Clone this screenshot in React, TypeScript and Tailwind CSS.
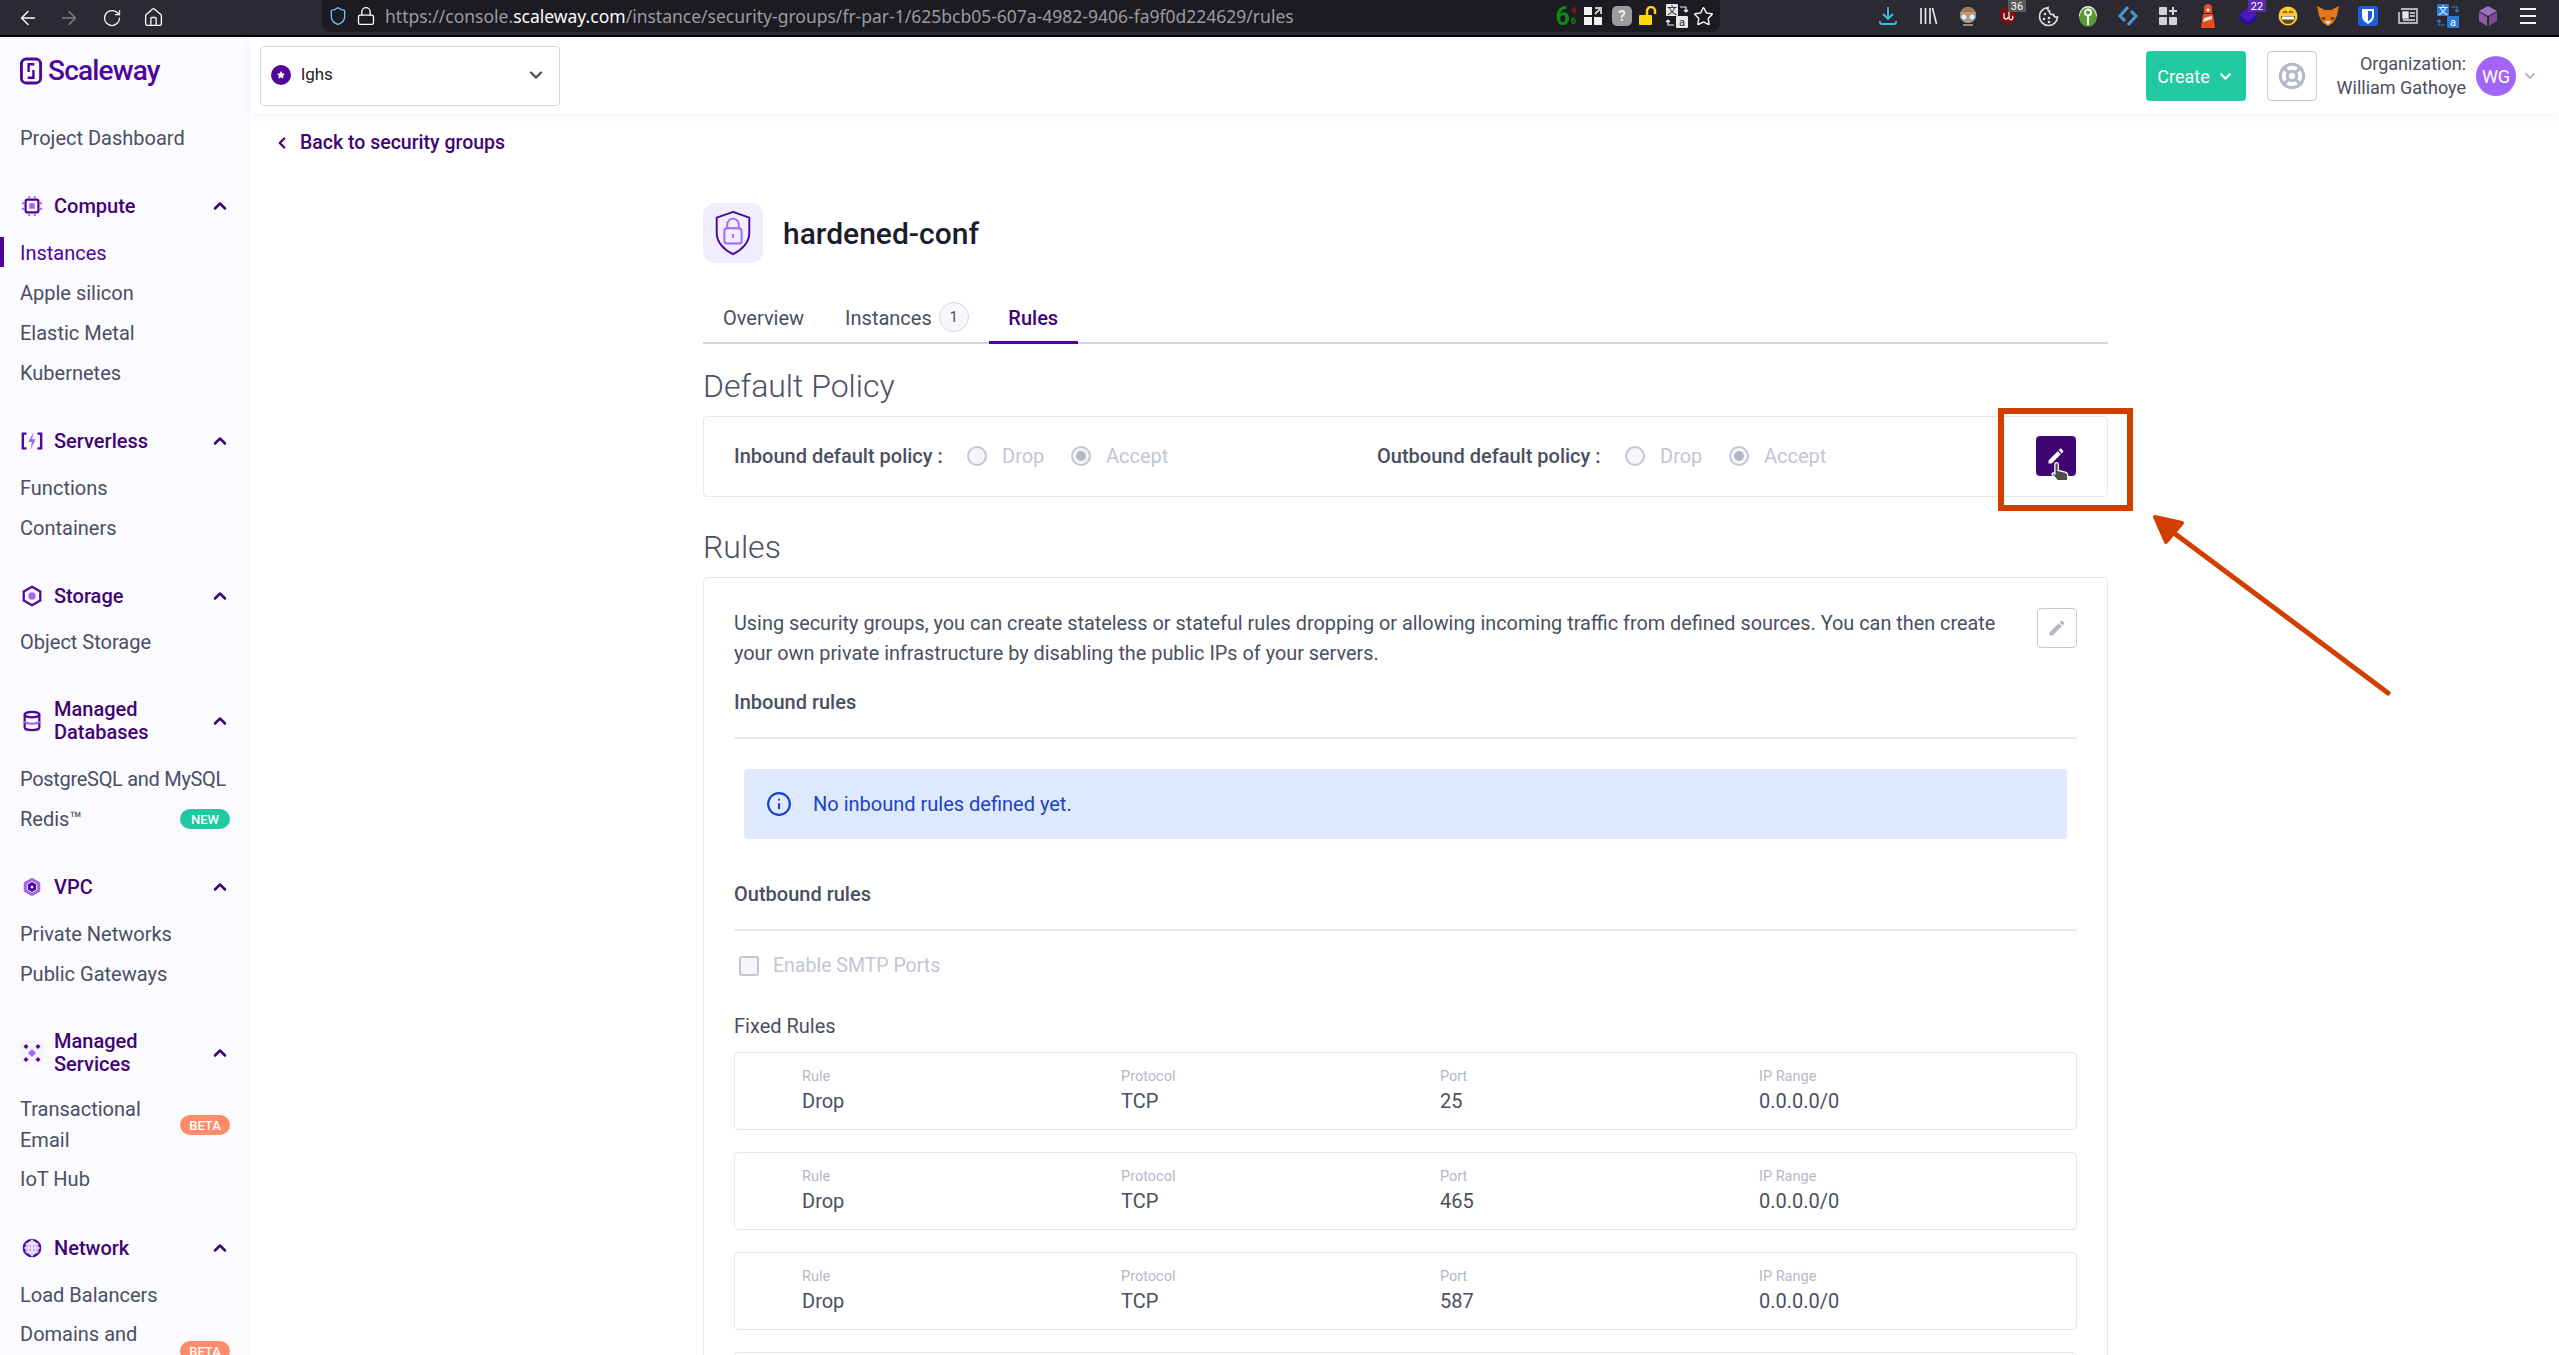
import React from 'react';
import { ArrowLeft, ArrowRight, ChevronDown, ChevronLeft, ChevronUp, Home, Info, LifeBuoy, Lock, RotateCw, Shield, Star } from 'lucide-react';

const font = "font-['Roboto','Noto_Sans_CJK_SC',sans-serif]";

function Badge({ label, color, cls }: { label: string; color: string; cls?: string }) {
  return <span className={`${color} ml-auto flex h-[20px] w-[50px] shrink-0 items-center justify-center rounded-full text-[13px] font-medium text-white ${cls ?? ''}`}>{label}</span>;
}

function NavItem({ label, active, badge, badgeColor, cls }: { label: React.ReactNode; active?: boolean; badge?: string; badgeColor?: string; cls?: string }) {
  return (
    <div className={`relative flex min-h-[40px] items-center pl-[20px] pr-[20px] text-[20px] leading-[31px] ${active ? 'text-[#4f0599]' : 'text-[#4a4f62]'} ${cls ?? ''}`}>
      {active && <span className="absolute left-0 top-[4px] h-[30px] w-[4px] bg-[#4f0599]" />}
      <span>{label}</span>
      {badge && <Badge label={badge} color={badgeColor ?? ''} />}
    </div>
  );
}

function SectionIcon({ name }: { name: string }) {
  if (name === 'compute') {
    return (
      <svg viewBox="0 0 24 24" className="h-[22px] w-[22px]" fill="none">
        <rect x="5" y="5" width="14" height="14" rx="2" stroke="#4f0599" strokeWidth="2.4" />
        <rect x="9" y="9" width="6" height="6" fill="#a365f6" />
        <path d="M9 1v3M15 1v3M9 20v3M15 20v3M1 9h3M1 15h3M20 9h3M20 15h3" stroke="#a365f6" strokeWidth="2" />
      </svg>
    );
  }
  if (name === 'serverless') {
    return (
      <svg viewBox="0 0 24 24" className="h-[22px] w-[22px]" fill="none">
        <path d="M6 4H2v16h4M18 4h4v16h-4" stroke="#4f0599" strokeWidth="2.6" />
        <path d="M14 2 8 13h4l-2 9 6-12h-4z" fill="#a365f6" />
      </svg>
    );
  }
  if (name === 'storage') {
    return (
      <svg viewBox="0 0 24 24" className="h-[22px] w-[22px]" fill="none">
        <path d="M12 2 21 7v10l-9 5-9-5V7z" stroke="#4f0599" strokeWidth="2.4" />
        <circle cx="12" cy="12" r="4" fill="#a365f6" />
      </svg>
    );
  }
  if (name === 'db') {
    return (
      <svg viewBox="0 0 24 24" className="h-[22px] w-[22px]" fill="none" stroke="#4f0599" strokeWidth="2.4">
        <ellipse cx="12" cy="5" rx="8" ry="3" />
        <path d="M4 5v14c0 1.700 3.600 3 8 3s8-1.300 8-3V5" />
        <path d="M4 12c0 1.700 3.600 3 8 3s8-1.300 8-3" stroke="#a365f6" />
      </svg>
    );
  }
  if (name === 'vpc') {
    return (
      <svg viewBox="0 0 24 24" className="h-[22px] w-[22px]" fill="none">
        <path d="M12 2 21 7v10l-9 5-9-5V7z" fill="#a365f6" />
        <path d="M12 6 17 9v6l-5 3-5-3V9z" fill="#4f0599" stroke="#fff" strokeWidth="1" />
        <circle cx="12" cy="12" r="1.500" fill="#fff" />
      </svg>
    );
  }
  if (name === 'services') {
    return (
      <svg viewBox="0 0 24 24" className="h-[24px] w-[24px]">
        <rect width="24" height="24" fill="#f5f5f8" />
        <path d="M12 8l4 4-4 4-4-4z" fill="#a365f6" />
        <path d="M6 3l2.500 2.500L6 8 3.500 5.500zM18 3l2.500 2.500L18 8l-2.500-2.500zM6 16l2.500 2.500L6 21l-2.500-2.500zM18 16l2.500 2.500L18 21l-2.500-2.500z" fill="#4f0599" />
      </svg>
    );
  }
  return (
    <svg viewBox="0 0 24 24" className="h-[22px] w-[22px]" fill="none">
      <circle cx="12" cy="12" r="9" fill="#c9a8f8" stroke="#4f0599" strokeWidth="2.400" />
      <path d="M3 12h18M12 3v18M5 7.500h14M5 16.500h14M12 3c-5 5-5 13 0 18M12 3c5 5 5 13 0 18" stroke="#fff" strokeWidth="1" />
    </svg>
  );
}

function Section({ icon, title, cls }: { icon: string; title: React.ReactNode; cls: string }) {
  return (
    <div className={`flex items-center pl-[20px] pr-[20px] text-[20px] font-medium leading-[23px] text-[#3f0573] ${cls}`}>
      <span className="flex w-[24px] shrink-0 justify-center"><SectionIcon name={icon} /></span>
      <span className="ml-[10px]">{title}</span>
      <ChevronUp className="ml-auto h-[20px] w-[20px] text-[#3f0573]" strokeWidth={3} />
    </div>
  );
}

function Sidebar() {
  return (
    <aside className="h-full w-[250px] shrink-0 overflow-hidden bg-[#fafaff]">
      <div className="mt-[20px] flex h-[28px] items-center pl-[20px]">
        <svg viewBox="0 0 24 28" className="h-[28px] w-[23px]" fill="none">
          <rect x="1.500" y="1.500" width="20" height="25" rx="5" stroke="#4f0599" strokeWidth="3" />
          <path d="M15 7H9v8M8 21h6v-8" stroke="#4f0599" strokeWidth="2.500" />
        </svg>
        <span className="ml-[5px] text-[28px] font-medium leading-none tracking-[-0.8px] text-[#4f0599]">Scaleway</span>
      </div>
      <NavItem label="Project Dashboard" cls="mt-[33px]" />
      <Section icon="compute" title="Compute" cls="mt-[36px] h-[24px]" />
      <NavItem label="Instances" active cls="mt-[15px]" />
      <NavItem label="Apple silicon" />
      <NavItem label="Elastic Metal" />
      <NavItem label="Kubernetes" />
      <Section icon="serverless" title="Serverless" cls="mt-[36px] h-[24px]" />
      <NavItem label="Functions" cls="mt-[15px]" />
      <NavItem label="Containers" />
      <Section icon="storage" title="Storage" cls="mt-[36px] h-[24px]" />
      <NavItem label="Object Storage" cls="mt-[14px]" />
      <Section icon="db" title={<>Managed<br />Databases</>} cls="mt-[36px] h-[46px]" />
      <NavItem label={<span className="whitespace-nowrap tracking-[-0.3px]">PostgreSQL and MySQL</span>} cls="mt-[15px]" />
      <NavItem label="Redis™" badge="NEW" badgeColor="bg-[#20c9a2]" />
      <Section icon="vpc" title="VPC" cls="mt-[36px] h-[24px]" />
      <NavItem label="Private Networks" cls="mt-[15px]" />
      <NavItem label="Public Gateways" />
      <Section icon="services" title={<>Managed<br />Services</>} cls="mt-[36px] h-[46px]" />
      <NavItem label={<>Transactional<br />Email</>} badge="BETA" badgeColor="bg-[#ff8c69]" cls="mt-[18px]" />
      <NavItem label="IoT Hub" cls="mt-[3px]" />
      <Section icon="network" title="Network" cls="mt-[37px] h-[24px]" />
      <NavItem label="Load Balancers" cls="mt-[15px]" />
      <div className="mt-[4px] flex h-[62px] items-start pl-[20px] pr-[20px] text-[20px] leading-[31px] text-[#4a4f62]">
        <span>Domains and</span>
        <Badge label="BETA" color="bg-[#ff8c69]" cls="mt-[22px]" />
      </div>
    </aside>
  );
}

function Cell({ children }: { children: React.ReactNode }) {
  return <span className="relative flex h-[32px] w-[40px] shrink-0 items-center justify-center">{children}</span>;
}

function CountTag({ n, color }: { n: string; color: string }) {
  return <span className={`${color} absolute left-[20px] top-0 flex h-[12px] w-[18px] items-center justify-center text-[11px] leading-none text-white`}>{n}</span>;
}

function TranslateIcon({ tile }: { tile: string }) {
  return (
    <svg width="22" height="24" viewBox="0 0 22 24" className="overflow-visible">
      <rect x="0" y="0" width="12" height="12" rx="1" fill={tile} />
      <rect x="10" y="12" width="12" height="12" rx="1" fill={tile} />
      <text x="6" y="10" textAnchor="middle" fontSize="10" fill={tile === '#e8e8e8' ? '#222' : '#fff'} fontFamily="Noto Sans CJK SC">文</text>
      <text x="16" y="22" textAnchor="middle" fontSize="11" fill={tile === '#e8e8e8' ? '#222' : '#fff'} fontFamily="Roboto">a</text>
      <path d="M14 3h6v5M18 6l2 2 2-2M8 21H2v-5M0 18l2-2 2 2" fill="none" stroke={tile === '#e8e8e8' ? '#eee' : '#2d7ad6'} strokeWidth="1.200" />
    </svg>
  );
}

function BrowserBar() {
  return (
    <div className="flex h-[37px] shrink-0 items-start border-b-[2px] border-black bg-[#2b2a33] text-[#fbfbfe]">
      <div className="flex h-[35px] w-[322px] shrink-0 items-center pl-[17px]">
        <ArrowLeft className="h-[22px] w-[22px]" strokeWidth={1.500} />
        <ArrowRight className="ml-[19px] h-[22px] w-[22px] opacity-40" strokeWidth={1.500} />
        <RotateCw className="ml-[22px] h-[20px] w-[20px]" strokeWidth={1.500} />
        <Home className="ml-[21px] h-[21px] w-[21px]" strokeWidth={1.500} />
      </div>
      <div className="relative flex h-[32px] w-[1398px] shrink-0 items-center rounded-b-[8px] bg-[#1c1b22]">
        <Shield className="ml-[6px] h-[20px] w-[20px] text-[#6ec6f5]" strokeWidth={1.600} />
        <Lock className="ml-[8px] h-[20px] w-[20px]" strokeWidth={1.600} />
        <span className="ml-[9px] whitespace-nowrap font-['Noto_Sans',sans-serif] text-[17.500px] leading-[24px] text-[#9b9aa1]">https://console.<span className="text-[#fbfbfe]">scaleway.com</span>/instance/security-groups/fr-par-1/625bcb05-607a-4982-9406-fa9f0d224629/rules</span>
        <span className="ml-auto flex h-[32px] items-center">
          <span className="text-[25px] font-bold leading-none text-[#0a8a12]">6</span>
          <span className="ml-[1px] text-[9px] font-bold leading-[10px] text-[#0a8a12]"><span className="block text-[#a01010]">4</span>6</span>
          <svg className="ml-[8px]" width="18" height="18" viewBox="0 0 18 18">
            <rect x="0" y="0" width="8" height="8" fill="#f0f0f0" />
            <rect x="0" y="10" width="8" height="8" fill="#f0f0f0" />
            <rect x="10" y="10" width="8" height="8" fill="#f0f0f0" />
            <path d="M11 1h6v6M17 1l-6 6" fill="none" stroke="#c8c8c8" strokeWidth="2" />
          </svg>
          <span className="ml-[10px] flex h-[20px] w-[20px] items-center justify-center rounded-[5px] bg-[#9c9c9c] text-[15px] font-bold leading-none text-[#eee]">?</span>
          <svg className="ml-[7px]" width="20" height="20" viewBox="0 0 20 20">
            <rect x="0" y="9" width="13" height="10" rx="1" fill="#ffd60a" />
            <path d="M8 9V5a4 4 0 0 1 8 0v3" fill="none" stroke="#ffd60a" strokeWidth="2.400" />
          </svg>
          <span className="ml-[7px] flex"><TranslateIcon tile="#e8e8e8" /></span>
          <Star className="ml-[5px] mr-[6px] h-[21px] w-[21px]" strokeWidth={1.600} />
        </span>
      </div>
      <div className="flex h-[32px] flex-1 items-center pl-[148px]">
        <Cell>
          <svg width="20" height="20" viewBox="0 0 20 20" fill="none" stroke="#2fc6e8" strokeWidth="1.800">
            <path d="M10 1v12M5 8l5 5 5-5M2 15v1.500c0 1 .6 1.500 1.500 1.500h13c.9 0 1.500-.5 1.500-1.500V15" />
          </svg>
        </Cell>
        <Cell>
          <svg width="20" height="20" viewBox="0 0 20 20" stroke="#ececec" strokeWidth="1.600">
            <path d="M3 2v16M7.500 2v16M12 2v16M14.500 2l4 16" />
          </svg>
        </Cell>
        <Cell>
          <svg width="20" height="20" viewBox="0 0 20 20">
            <circle cx="10" cy="9" r="8" fill="#c89a78" />
            <path d="M3 6a8 8 0 0 1 14 0z" fill="#a87850" />
            <circle cx="6" cy="11" r="3.300" fill="#e0f0f0" stroke="#6a8a90" />
            <circle cx="14" cy="11" r="3.300" fill="#e0f0f0" stroke="#6a8a90" />
            <path d="M5 18h10v2H5z" fill="#8a8a8a" />
          </svg>
        </Cell>
        <Cell>
          <svg width="18" height="20" viewBox="0 0 18 20">
            <path d="M9 1 17 3v8c0 4-4 7-8 8-4-1-8-4-8-8V3z" fill="#7a0f0f" />
            <path d="M5 7v4a2 2 0 0 0 4 0M10 5v8M10 11a2 2 0 1 0 3-1" fill="none" stroke="#eee" strokeWidth="1.300" />
          </svg>
          <CountTag n="36" color="bg-[#595959]" />
        </Cell>
        <Cell>
          <svg width="21" height="21" viewBox="0 0 21 21" fill="none">
            <path d="M10 1.500a9 9 0 1 0 9.500 9.500c-2 .5-4-.5-4-2.500-2.500.5-4.500-1-4-3.500-1.500 0-2-1.500-1.500-3.500z" stroke="#dedede" strokeWidth="1.700" />
            <circle cx="7" cy="8" r="1.300" fill="#dedede" />
            <circle cx="6" cy="13" r="1.300" fill="#dedede" />
            <circle cx="11" cy="12" r="1.300" fill="#dedede" />
            <circle cx="11" cy="16" r="1.300" fill="#dedede" />
          </svg>
        </Cell>
        <Cell>
          <svg width="18" height="21" viewBox="0 0 18 21">
            <ellipse cx="9" cy="10.500" rx="9" ry="10.500" fill="#5a9a34" />
            <path d="M0 10.500C0 5 4 0 9 0s9 5 9 10.500h-1c0-5-3.500-9-8-9s-8 4-8 9z" fill="#e8e8e8" />
            <circle cx="9" cy="6.500" r="3" fill="none" stroke="#fff" strokeWidth="1.800" />
            <path d="M9 9v10" stroke="#fff" strokeWidth="2" />
          </svg>
        </Cell>
        <Cell>
          <svg width="20" height="20" viewBox="0 0 20 20" fill="none" stroke="#4b9ad8" strokeWidth="3">
            <path d="M10 1 2 10l5 5M10 19l8-9-5-5" />
          </svg>
        </Cell>
        <Cell>
          <svg width="18" height="18" viewBox="0 0 18 18" fill="#d2d2d4">
            <rect x="0" y="0" width="8" height="8" rx="1" />
            <rect x="0" y="10" width="8" height="8" rx="1" />
            <rect x="10" y="10" width="8" height="8" rx="1" />
            <path d="M13 0h2v3h3v2h-3v3h-2V5h-3V3h3z" />
          </svg>
        </Cell>
        <Cell>
          <svg width="16" height="24" viewBox="0 0 16 24">
            <path d="M3 10h10l2 14H1z" fill="#ea4b22" />
            <path d="M4 4a4 4 0 0 1 8 0v5H4z" fill="#ea4b22" />
            <path d="M4 14l8-2v3l-9 3z" fill="#f5e6d8" />
            <circle cx="8" cy="6" r="1.500" fill="#fff" />
          </svg>
        </Cell>
        <Cell>
          <svg width="20" height="20" viewBox="0 0 20 20">
            <path d="M10 3l10 9-10 8L0 12z" fill="#2a0f8a" />
            <path d="M10 1l9 8-9 7-9-7z" fill="#4a16c0" />
          </svg>
          <CountTag n="22" color="bg-[#5b2ab0]" />
        </Cell>
        <Cell>
          <svg width="20" height="20" viewBox="0 0 20 20">
            <circle cx="10" cy="10" r="9.500" fill="#ffc933" />
            <path d="M3 10h14c0 5-3 8-7 8s-7-3-7-8z" fill="#6a4a1a" />
            <path d="M4 10.500h12v3H4z" fill="#fff" />
            <path d="M5 7c1-2 3-2 4 0M11 7c1-2 3-2 4 0" fill="none" stroke="#6a4a1a" strokeWidth="1.300" />
          </svg>
        </Cell>
        <Cell>
          <svg width="22" height="20" viewBox="0 0 22 20">
            <path d="M0 0l8 4h6l8-4-2 10-4 7-5 3-5-3-4-7z" fill="#e2761b" />
            <path d="M5 11l4 1-3 2zM17 11l-4 1 3 2z" fill="#3a2a1a" />
            <path d="M8 15h6l-3 4z" fill="#f0e0d0" />
          </svg>
        </Cell>
        <Cell>
          <span className="flex h-[20px] w-[20px] items-center justify-center rounded-[3px] bg-[#175ddc]">
            <svg width="12" height="15" viewBox="0 0 12 15">
              <path d="M0 0h12v7c0 4-3 6-6 8-3-2-6-4-6-8z" fill="#fff" />
              <path d="M6 2h4v5c0 2.500-2 4-4 5.500z" fill="#175ddc" />
            </svg>
          </span>
        </Cell>
        <Cell>
          <svg width="20" height="16" viewBox="0 0 20 16" fill="none" stroke="#e4e4e4" strokeWidth="1.400">
            <path d="M3 1h16v14H1V4" />
            <rect x="5" y="4" width="5" height="6" fill="#e4e4e4" />
            <path d="M12 5h5M12 8h5M5 12h12" />
          </svg>
        </Cell>
        <Cell><TranslateIcon tile="#2d7ad6" /></Cell>
        <Cell>
          <svg width="18" height="20" viewBox="0 0 18 20">
            <path d="M9 0l9 5-9 5-9-5z" fill="#a070c0" />
            <path d="M0 6l8 5v9l-8-5z" fill="#8e5aa8" />
            <path d="M18 6l-8 5v9l8-5z" fill="#7d4a98" />
          </svg>
        </Cell>
        <span className="ml-[12px] flex h-[16px] w-[16px] flex-col justify-between">
          <i className="h-[2px] w-full bg-[#f2f2f2]" />
          <i className="h-[2px] w-full bg-[#f2f2f2]" />
          <i className="h-[2px] w-full bg-[#f2f2f2]" />
        </span>
      </div>
    </div>
  );
}

function Header() {
  return (
    <header className="flex h-[76px] shrink-0 items-start bg-white shadow-[0_3px_8px_rgba(60,60,100,0.06)]">
      <div className="ml-[10px] mt-[9px] flex h-[60px] w-[300px] items-start rounded-[4px] border border-[#d4d6e4] pl-[10px] pr-[13px] pt-[18px]">
        <span className="flex h-[20px] w-[20px] items-center justify-center rounded-full bg-[#4f0599]"><Star className="h-[8px] w-[8px] fill-white text-white" /></span>
        <span className="ml-[10px] text-[17px] leading-[18px] text-[#22242e]">lghs</span>
        <ChevronDown className="ml-auto h-[20px] w-[20px] text-[#4a4f62]" strokeWidth={2.800} />
      </div>
      <div className="ml-auto mr-[21px] flex items-start">
        <button className="mt-[14px] flex h-[50px] w-[100px] items-center justify-center gap-[7px] rounded-[4px] bg-[#20c9a2] text-[18px] text-white">Create<ChevronDown className="h-[17px] w-[17px]" strokeWidth={3} /></button>
        <span className="ml-[21px] mt-[14px] flex h-[50px] w-[50px] items-center justify-center rounded-[4px] border border-[#c3c5d6]"><LifeBuoy className="h-[28px] w-[28px] text-[#b4b7c8]" strokeWidth={2.600} /></span>
        <div className="ml-[20px] mt-[15px] text-right text-[18px] leading-[24px] text-[#4a4f62]">Organization:<br />William Gathoye</div>
        <span className="ml-[10px] mt-[19px] flex h-[40px] w-[40px] items-center justify-center rounded-full bg-[#a365f6] text-[18px] text-white">WG</span>
        <ChevronDown className="ml-[6px] mt-[31px] h-[16px] w-[16px] text-[#b4b7c8]" strokeWidth={2.800} />
      </div>
    </header>
  );
}

function Radio({ label, checked, cls }: { label: string; checked?: boolean; cls?: string }) {
  return (
    <span className={`flex items-center ${cls ?? ''}`}>
      <span className="flex h-[20px] w-[20px] items-center justify-center rounded-full border-[2px] border-[#c3c5d6] bg-[#f5f6fa]">
        {checked && <span className="h-[10px] w-[10px] rounded-full bg-[#b4b7c8]" />}
      </span>
      <span className="ml-[15px] text-[20px] text-[#c3c5d6]">{label}</span>
    </span>
  );
}

function PolicyGroup({ label, cls, labelCls }: { label: string; cls: string; labelCls: string }) {
  return (
    <div className={`flex items-center ${cls}`}>
      <span className={`${labelCls} text-[20px] font-medium text-[#4a4f62]`}>{label}</span>
      <Radio label="Drop" cls="w-[104px]" />
      <Radio label="Accept" checked />
    </div>
  );
}

function RuleRow({ port }: { port: string }) {
  const cols = [['Rule', 'Drop'], ['Protocol', 'TCP'], ['Port', port], ['IP Range', '0.0.0.0/0']];
  return (
    <div className="mb-[22px] grid h-[78px] grid-cols-[319px_319px_319px_1fr] rounded-[4px] border border-[#e6e7ef] pl-[67px] pt-[13px]">
      {cols.map(([k, v]) => (
        <div key={k}>
          <div className="text-[14.500px] leading-[22px] text-[#b4b7c8]">{k}</div>
          <div className="text-[20px] leading-[26px] text-[#4a4f62]">{v}</div>
        </div>
      ))}
    </div>
  );
}

function EditGlyph({ color }: { color: string }) {
  return (
    <svg width="20" height="20" viewBox="0 0 24 24" fill={color}>
      <path d="M3 17.250V21h3.750L17.810 9.940l-3.750-3.750L3 17.250zM20.710 7.040c.39-.39.39-1.020 0-1.410l-2.340-2.340c-.39-.39-1.020-.39-1.410 0l-1.830 1.830 3.750 3.750 1.830-1.830z" />
    </svg>
  );
}

function Main() {
  return (
    <main className="relative min-w-0 flex-1 overflow-hidden">
      <div className="mt-[17px] flex items-center pl-[23px] text-[19.500px] font-medium leading-[26px] text-[#3f0573]">
        <ChevronLeft className="h-[18px] w-[18px]" strokeWidth={3} />
        <span className="ml-[9px]">Back to security groups</span>
      </div>
      <div className="ml-[453px] w-[1405px]">
        <div className="mt-[47px] flex h-[60px] items-center">
          <span className="flex h-[60px] w-[60px] items-center justify-center rounded-[12px] bg-[#f0edfe]">
            <svg viewBox="0 0 40 48" className="h-[46px] w-[40px]" fill="none">
              <path d="M20 2 37 8v16c0 10-8 18-17 22C11 42 3 34 3 24V8z" stroke="#4f0599" strokeWidth="2" />
              <rect x="11" y="19" width="18" height="16" rx="3" stroke="#a365f6" strokeWidth="2" />
              <path d="M14 19v-4a6 6 0 0 1 12 0v4M20 25v4" stroke="#a365f6" strokeWidth="2" />
            </svg>
          </span>
          <h1 className="ml-[20px] mt-[2px] text-[30px] font-medium leading-none text-[#1a1d2b]">hardened-conf</h1>
        </div>
        <div className="mt-[28px] flex h-[53px] items-start border-b-[2px] border-[#d4d6e4] pl-[20px] text-[20px] leading-[28px] text-[#4a4f62]">
          <span className="mt-[13px]">Overview</span>
          <span className="ml-[41px] mt-[13px]">Instances</span>
          <span className="ml-[7px] mt-[11px] flex h-[30px] w-[30px] items-center justify-center rounded-full border border-[#d4d6e4] bg-[#f8f8fc] text-[15px]">1</span>
          <span className="relative ml-[20px] flex h-[53px] w-[89px] justify-center border-b-[3px] border-[#4f0599] pt-[13px] font-medium text-[#3f0573]">Rules</span>
        </div>
        <h2 className="mt-[24px] text-[32px] font-light leading-[36px] text-[#4a4f62]">Default Policy</h2>
        <div className="mt-[12px] flex h-[81px] items-center rounded-[4px] border border-[#e6e7ef] pb-[1px] pl-[30px]">
          <PolicyGroup label="Inbound default policy :" cls="w-[643px]" labelCls="w-[233px]" />
          <PolicyGroup label="Outbound default policy :" cls="" labelCls="w-[248px]" />
          <button className="ml-auto mr-[31px] flex h-[40px] w-[40px] items-center justify-center rounded-[4px] bg-[#3f0573]"><EditGlyph color="#fff" /></button>
        </div>
        <h2 className="mt-[32px] text-[32px] font-light leading-[36px] text-[#4a4f62]">Rules</h2>
        <div className="mt-[12px] rounded-[4px] border border-[#e6e7ef] px-[30px] pt-[30px]">
          <div className="flex items-start justify-between">
            <p className="mt-[1px] w-[1272px] text-[19.850px] leading-[30px] text-[#4a4f62]">Using security groups, you can create stateless or stateful rules dropping or allowing incoming traffic from defined sources. You can then create your own private infrastructure by disabling the public IPs of your servers.</p>
            <button className="flex h-[40px] w-[40px] items-center justify-center rounded-[4px] border border-[#c3c5d6]"><EditGlyph color="#b4b7c8" /></button>
          </div>
          <div className="mt-[19px] border-b-[2px] border-[#eaebf2] pb-[21px] text-[20px] font-medium leading-[28px] text-[#4a4f62]">Inbound rules</div>
          <div className="mx-[10px] mt-[30px] flex h-[70px] items-center rounded-[4px] bg-[#dfe9fe] pl-[22px] text-[20px] text-[#1a44c4]">
            <Info className="h-[26px] w-[26px]" strokeWidth={2} />
            <span className="ml-[21px]">No inbound rules defined yet.</span>
          </div>
          <div className="mt-[41px] border-b-[2px] border-[#eaebf2] pb-[21px] text-[20px] font-medium leading-[28px] text-[#4a4f62]">Outbound rules</div>
          <div className="mt-[21px] flex items-center pl-[5px]">
            <span className="h-[20px] w-[20px] rounded-[3px] border-[2px] border-[#c3c5d6] bg-[#f5f6fa]" />
            <span className="ml-[14px] text-[19.500px] leading-[28px] text-[#c3c5d6]">Enable SMTP Ports</span>
          </div>
          <div className="mt-[32px] text-[20px] leading-[28px] text-[#4a4f62]">Fixed Rules</div>
          <div className="mt-[12px]">
            <RuleRow port="25" />
            <RuleRow port="465" />
            <RuleRow port="587" />
            <div className="h-[78px] rounded-[4px] border border-[#e6e7ef]" />
          </div>
        </div>
      </div>
      {/* annotation drawn over the page */}
      <div className="absolute left-[1748px] top-[295px] h-[103px] w-[135px] border-[6px] border-[#d03f00]" />
      <svg className="absolute left-[1880px] top-[390px]" width="280" height="200" fill="none">
        <path d="M258 190 36 24" stroke="#d03f00" strokeWidth="5" strokeLinecap="round" />
        <path d="M25 14 52 20 36 39z" fill="#d03f00" stroke="#d03f00" strokeWidth="4" strokeLinejoin="round" />
      </svg>
      <svg className="absolute left-[1799px] top-[348px]" width="22" height="24" viewBox="0 0 24 28">
        <path d="M8 2c1.500 0 2 1 2 2v7l8 2c2 .5 3 2 3 4v6H9l-6-7c-1-1.500 1-3 3-1V4c0-1 .500-2 2-2z" fill="#4d4d4d" stroke="#fff" strokeWidth="1.500" />
      </svg>
    </main>
  );
}

export default function App() {
  return (
    <div className={`${font} flex h-[1355px] w-[2559px] flex-col overflow-hidden bg-white`}>
      <BrowserBar />
      <div className="flex min-h-0 flex-1">
        <Sidebar />
        <div className="flex min-w-0 flex-1 flex-col">
          <Header />
          <Main />
        </div>
      </div>
    </div>
  );
}
